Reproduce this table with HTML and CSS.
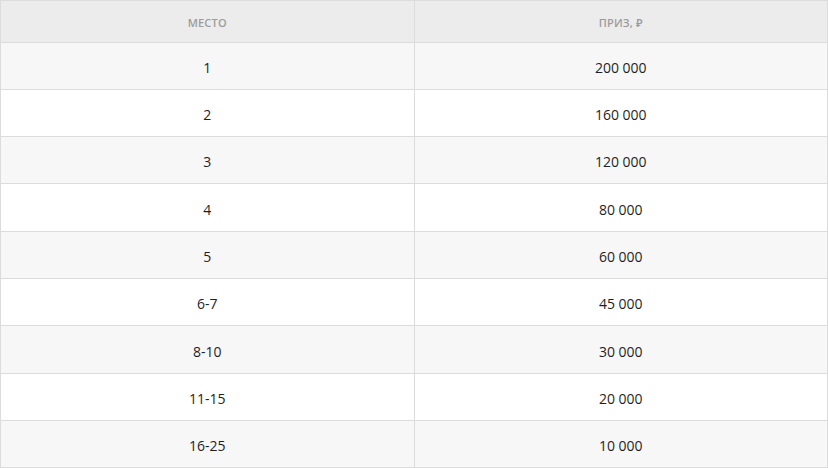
FILE: index.html
```html
<!DOCTYPE html>
<html lang="ru">
<head>
<meta charset="utf-8">
<link rel="stylesheet" href="styles.css">
</head>
<body>
<table class="prizes">
  <thead>
    <tr><th>Место</th><th>Приз, ₽</th></tr>
  </thead>
  <tbody>
    <tr><td>1</td><td>200 000</td></tr>
    <tr><td>2</td><td>160 000</td></tr>
    <tr><td>3</td><td>120 000</td></tr>
    <tr><td>4</td><td>80 000</td></tr>
    <tr><td>5</td><td>60 000</td></tr>
    <tr><td>6-7</td><td>45 000</td></tr>
    <tr><td>8-10</td><td>30 000</td></tr>
    <tr><td>11-15</td><td>20 000</td></tr>
    <tr><td>16-25</td><td>10 000</td></tr>
  </tbody>
</table>
</body>
</html>
```
FILE: styles.css
```css
html, body {
  margin: 0;
  padding: 0;
  background: #ffffff;
}
body {
  font-family: "Open Sans", "Noto Sans", sans-serif;
  color: #222222;
}
.prizes {
  width: 828px;
  border-collapse: collapse;
  table-layout: fixed;
}
.prizes th,
.prizes td {
  border: 1px solid #dcdcdc;
  text-align: center;
  padding: 0;
  box-sizing: border-box;
}
.prizes th {
  height: 41.5px;
  padding-top: 2px;
  background: #ececec;
  color: #9c9c9c;
  font-size: 11px;
  font-weight: 600;
  text-transform: uppercase;
  letter-spacing: 0.2px;
}
.prizes td {
  height: 47.33px;
  padding-top: 3px;
  font-size: 14px;
  font-weight: 500;
  color: #1f1f1f;
}
.prizes tbody tr:nth-child(odd) td {
  background: #f7f7f7;
}
.prizes tbody tr:nth-child(even) td {
  background: #ffffff;
}
```
